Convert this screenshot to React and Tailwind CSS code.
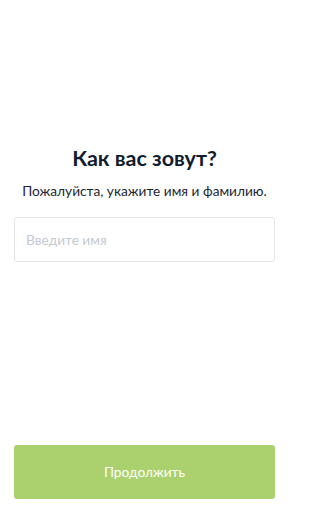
export default function App() {
  return (
    <div
      className="flex h-[512px] w-[289px] flex-col bg-white px-[14px] pb-[13px]"
      style={{ fontFamily: "Lato, 'Noto Sans', sans-serif" }}
    >
      <div className="flex flex-1 flex-col">
        <h1 className="mt-[145px] text-center text-[21.5px] font-bold leading-[26px] text-[#111c2e]">
          Как вас зовут?
        </h1>
        <p className="mt-[11px] text-center text-[13.7px] leading-[18px] text-[#1d2633]">
          Пожалуйста, укажите имя и фамилию.
        </p>
        <input
          type="text"
          placeholder="Введите имя"
          className="mt-[17px] h-[45px] w-full rounded-[3px] border border-[#e3e7ec] px-[11px] text-[13.7px] text-[#1d2633] outline-none placeholder:text-[#c3c9d1]"
        />
      </div>
      <button
        type="button"
        className="h-[54px] w-full rounded-[3px] bg-[#aad16e] text-[13.7px] text-white"
      >
        Продолжить
      </button>
    </div>
  );
}
